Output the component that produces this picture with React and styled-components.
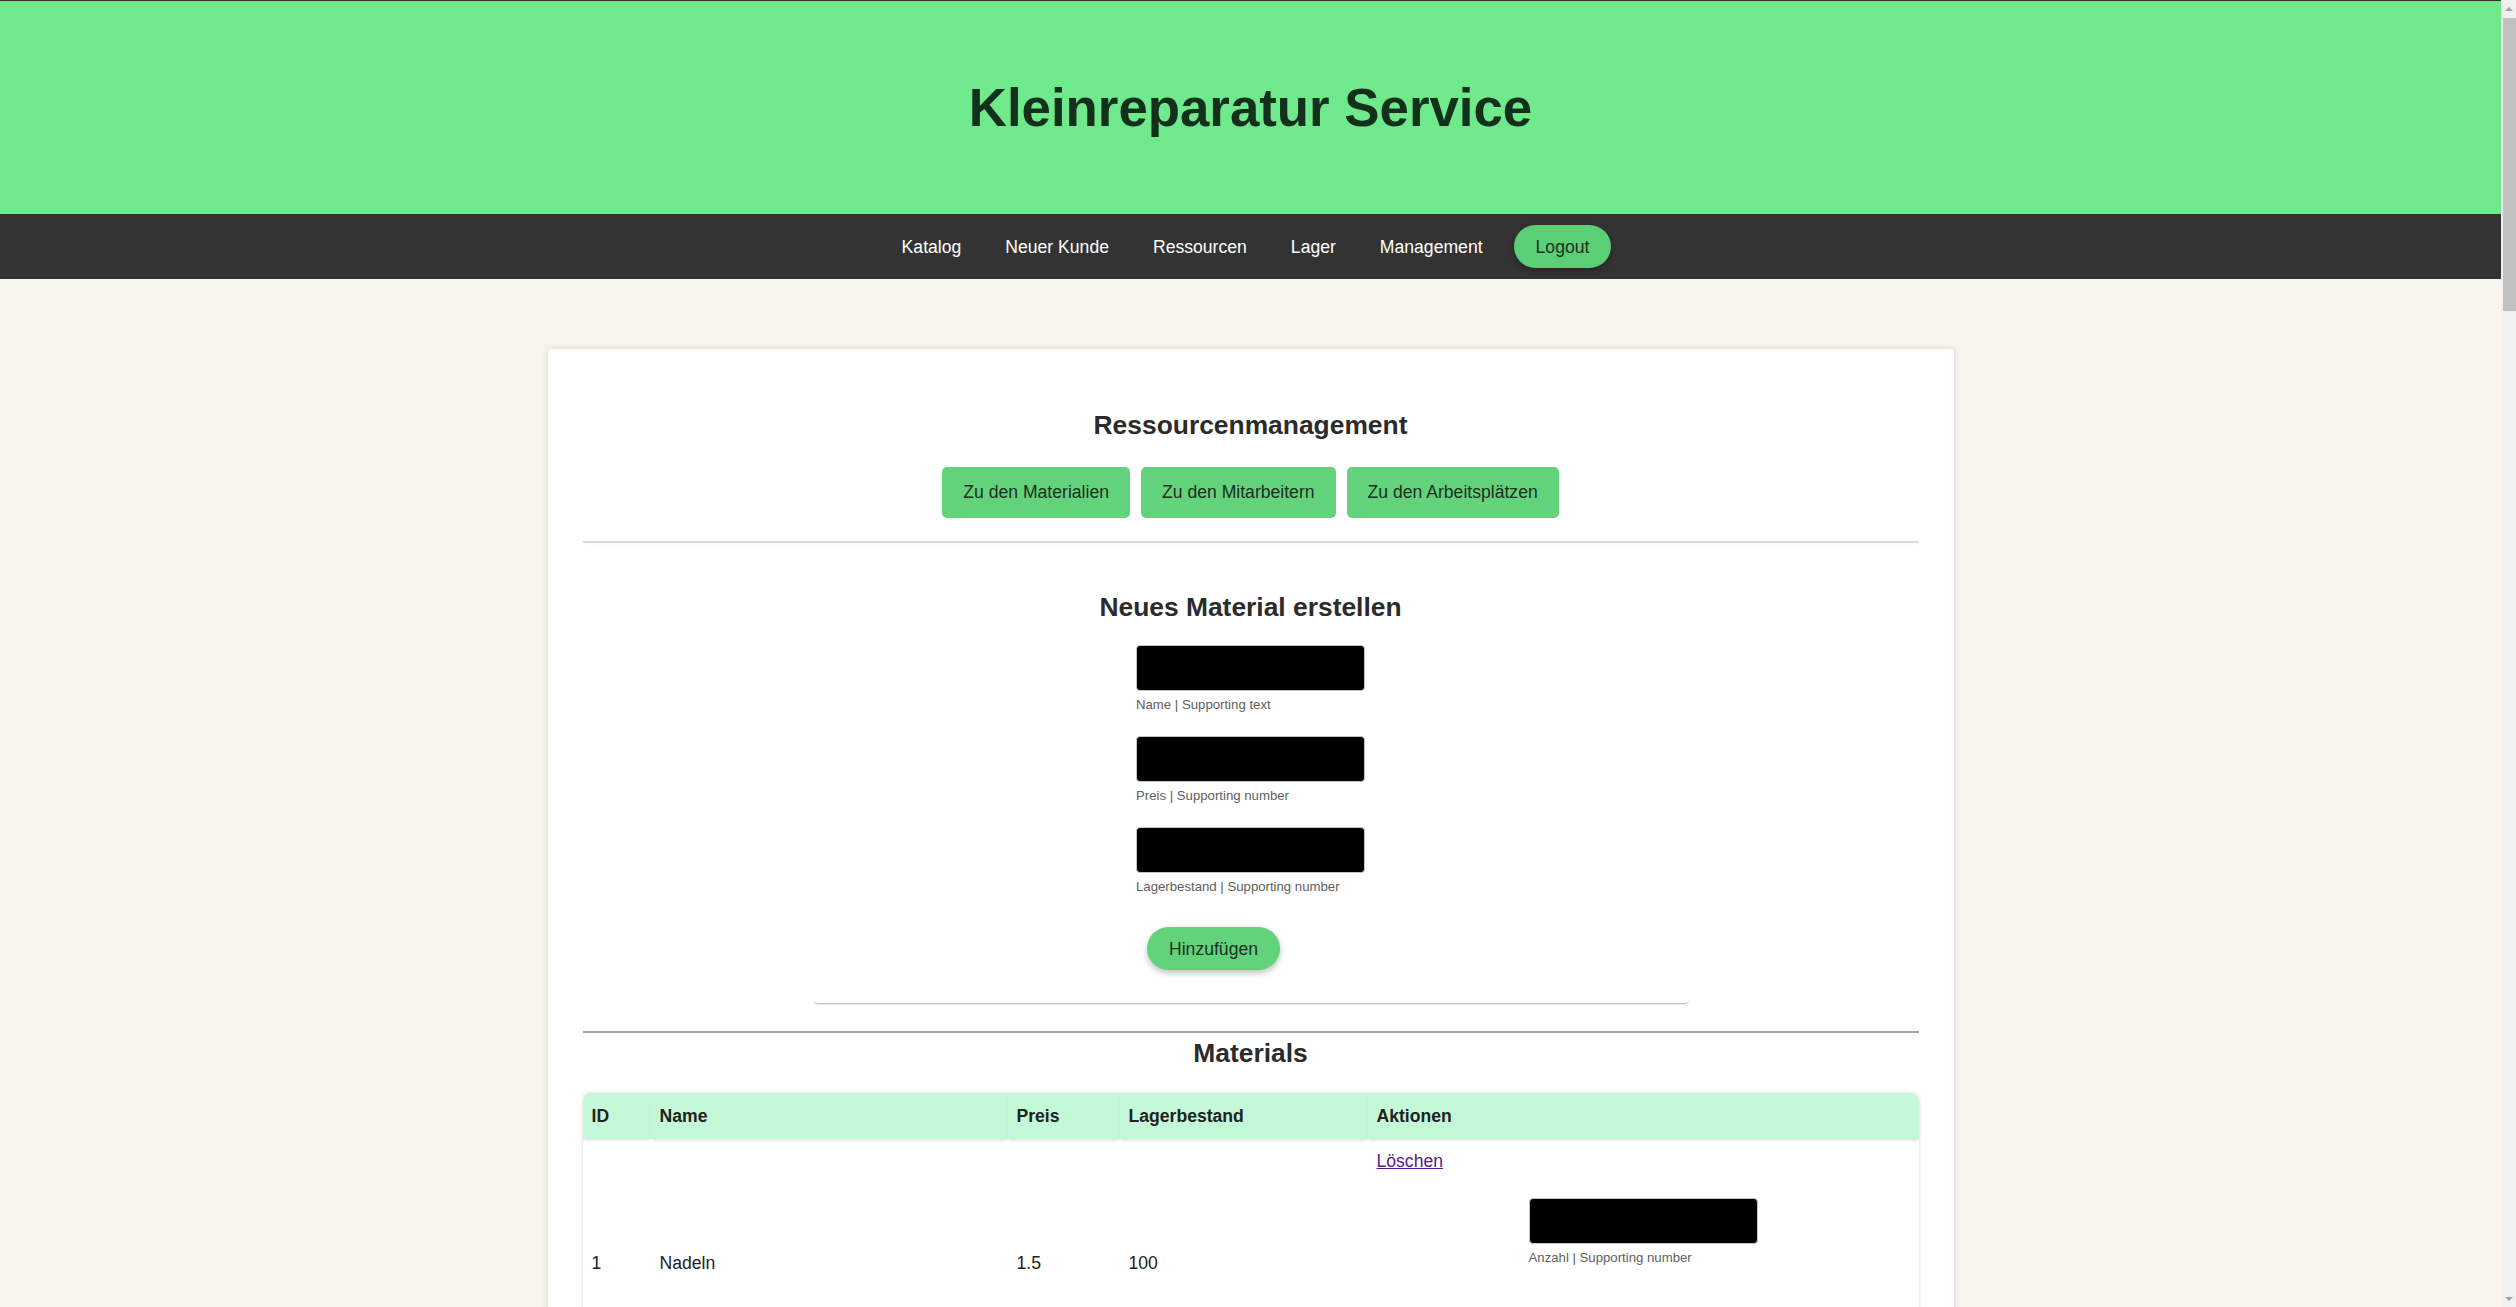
import React, { useState } from "react";
import styled, { createGlobalStyle } from "styled-components";

const GlobalStyle = createGlobalStyle`
  html, body {
    margin: 0;
    padding: 0;
    background: #f7f5ee;
    font-family: "Liberation Sans", Arial, sans-serif;
    font-size: 17.6px;
    color: #222;
  }
  body {
    margin-right: 15px;
  }
  * { box-sizing: border-box; }
`;

// Materialliste
const materials = [
  { id: 1, name: "Nadeln", price: "1.5", stock: 100 },
  { id: 2, name: "Faden", price: "0.8", stock: 250 },
  { id: 3, name: "Knöpfe", price: "0.3", stock: 500 },
  { id: 4, name: "Reißverschluss", price: "2.5", stock: 80 },
  { id: 5, name: "Schuhsohlen", price: "6", stock: 40 },
  { id: 6, name: "Absätze", price: "4.5", stock: 60 },
  { id: 7, name: "Leder", price: "12", stock: 25 },
  { id: 8, name: "Kleber", price: "3.2", stock: 70 },
  { id: 9, name: "Schnürsenkel", price: "1.2", stock: 150 },
  { id: 10, name: "Batterien", price: "2", stock: 120 },
  { id: 11, name: "Uhrenarmband", price: "8", stock: 30 },
  { id: 12, name: "Ösen", price: "0.2", stock: 400 },
  { id: 13, name: "Nieten", price: "0.4", stock: 300 },
  { id: 14, name: "Stoff", price: "5", stock: 50 },
  { id: 15, name: "Garn", price: "1", stock: 200 },
  { id: 16, name: "Schrauben", price: "0.1", stock: 1000 },
  { id: 17, name: "Gummiband", price: "0.6", stock: 180 },
  { id: 18, name: "Schuhcreme", price: "3.5", stock: 45 },
];

const Field = ({ label, value, onChange }) => (
  <InputGroup>
    <BlackInput value={value} onChange={onChange} />
    <HelpText>{label}</HelpText>
  </InputGroup>
);

const App = () => {
  const [name, setName] = useState("");
  const [price, setPrice] = useState("");
  const [stock, setStock] = useState("");

  return (
    <>
      <GlobalStyle />
      <Header>
        <Title>Kleinreparatur Service</Title>
      </Header>
      <Nav>
        <NavLink href="#">Katalog</NavLink>
        <NavLink href="#">Neuer Kunde</NavLink>
        <NavLink href="#">Ressourcen</NavLink>
        <NavLink href="#">Lager</NavLink>
        <NavLink href="#">Management</NavLink>
        <PillButton $nav>Logout</PillButton>
      </Nav>

      <Card>
        <SectionTitle>Ressourcenmanagement</SectionTitle>
        <ButtonRow>
          <LinkButton>Zu den Materialien</LinkButton>
          <LinkButton>Zu den Mitarbeitern</LinkButton>
          <LinkButton>Zu den Arbeitsplätzen</LinkButton>
        </ButtonRow>
        <Divider />

        <FormBox $main>
          <SectionTitle>Neues Material erstellen</SectionTitle>
          <Fields $top>
            <Field label="Name | Supporting text" value={name} onChange={(e) => setName(e.target.value)} />
            <Field label="Preis | Supporting number" value={price} onChange={(e) => setPrice(e.target.value)} />
            <Field label="Lagerbestand | Supporting number" value={stock} onChange={(e) => setStock(e.target.value)} />
            <PillButton>Hinzufügen</PillButton>
          </Fields>
        </FormBox>

        <Divider $dark />
        <SectionTitle $small>Materials</SectionTitle>

        <Table>
          <colgroup>
            <col style={{ width: 68 }} />
            <col style={{ width: 357 }} />
            <col style={{ width: 112 }} />
            <col style={{ width: 248 }} />
            <col />
          </colgroup>
          <thead>
            <tr>
              <Th>ID</Th>
              <Th>Name</Th>
              <Th>Preis</Th>
              <Th>Lagerbestand</Th>
              <Th>Aktionen</Th>
            </tr>
          </thead>
          <tbody>
            {materials.map((m) => (
              <tr key={m.id}>
                <Td>{m.id}</Td>
                <Td>{m.name}</Td>
                <Td>{m.price}</Td>
                <Td>{m.stock}</Td>
                <Td>
                  <DeleteLink href="#">Löschen</DeleteLink>
                  <FormBox>
                    <Fields $cell>
                      <Field label="Anzahl | Supporting number" />
                      <PillButton>Nachbestellen</PillButton>
                    </Fields>
                  </FormBox>
                </Td>
              </tr>
            ))}
          </tbody>
        </Table>
      </Card>

      {/* Scrollleiste wie im Fenster */}
      <ScrollTrack>
        <Arrow />
        <Thumb />
        <Arrow $down />
      </ScrollTrack>
    </>
  );
};

export default App;

const Header = styled.header`
  height: 214px;
  border-top: 1px solid #333;
  background: #6fe98b;
  display: flex;
  align-items: center;
  justify-content: center;
`;

const Title = styled.h1`
  margin: 0;
  font-size: 52.8px;
  font-weight: 700;
  color: #12301b;
`;

const Nav = styled.nav`
  height: 65px;
  padding-right: 10px;
  background: #333;
  display: flex;
  align-items: center;
  justify-content: center;
`;

const NavLink = styled.a`
  padding: 0 22px;
  color: #fff;
  text-decoration: none;
  font-size: 17.6px;
  line-height: 20px;
`;

const PillButton = styled.button`
  align-self: ${(p) => (p.$nav ? "center" : "flex-start")};
  margin: ${(p) => (p.$nav ? "0 0 0 9px" : "0 0 0 11px")};
  padding: 11.5px 22px;
  border: none;
  border-radius: 22px;
  background: ${(p) => (p.$nav ? "#5bcf76" : "#62d37b")};
  color: #1c2e21;
  font-family: inherit;
  font-size: 17.6px;
  line-height: 20px;
  box-shadow: 0 3px 6px rgba(0, 0, 0, 0.25);
  cursor: pointer;
`;

const Card = styled.main`
  width: 1406px;
  margin: 70px auto 70px;
  padding: 61px 35px 40px;
  background: #fff;
  border-radius: 4px;
  box-shadow: 0 0 6px rgba(0, 0, 0, 0.15);
`;

const SectionTitle = styled.h2`
  margin: ${(p) => (p.$small ? "5px 0 0" : "0")};
  text-align: center;
  font-size: 26.4px;
  line-height: 30px;
  font-weight: 700;
  color: #2b2b2b;
`;

const ButtonRow = styled.div`
  margin-top: 27px;
  display: flex;
  justify-content: center;
  gap: 11px;
`;

const LinkButton = styled.button`
  height: 51px;
  padding: 0 21px;
  border: none;
  border-radius: 5px;
  background: #62d37b;
  color: #1c2e21;
  font-family: inherit;
  font-size: 17.6px;
  cursor: pointer;
`;

const Divider = styled.hr`
  margin: ${(p) => (p.$dark ? "28px 0 0" : "23px 0 0")};
  height: 2px;
  border: none;
  background: ${(p) => (p.$dark ? "#a3a3a3" : "#dcdcdc")};
  box-shadow: ${(p) => (p.$dark ? "none" : "0 0 9px rgba(0, 0, 0, 0.05)")};
`;

const FormBox = styled.div`
  width: ${(p) => (p.$main ? "878px" : "100%")};
  margin: 0 auto;
  padding: ${(p) => (p.$main ? "49px 0 33px" : "0 0 21px")};
  border-radius: 0 0 6px 6px;
  box-shadow: 0 3px 2px -2px rgba(0, 0, 0, 0.3);
`;

const Fields = styled.div`
  width: 229px;
  margin: ${(p) => (p.$top ? "23px auto 0" : "0 auto")};
  display: flex;
  flex-direction: column;
  gap: 24px;

  & > button {
    margin-top: ${(p) => (p.$cell ? "22px" : "9px")};
  }
`;

const InputGroup = styled.div`
  display: flex;
  flex-direction: column;
`;

const BlackInput = styled.input`
  width: 229px;
  height: 46px;
  border: 1px solid #c4c4c4;
  border-radius: 4px;
  background: #000;
  color: #fff;
  padding: 0 10px;
  outline: none;
`;

const HelpText = styled.span`
  margin-top: 6px;
  font-size: 13.2px;
  line-height: 15px;
  color: #606060;
  white-space: nowrap;
`;

const Table = styled.table`
  width: 100%;
  margin-top: 25px;
  border-collapse: separate;
  border-spacing: 0;
  table-layout: fixed;
  border-radius: 8px 8px 0 0;
  box-shadow: 0 0 4px rgba(0, 0, 0, 0.15);
`;

const Th = styled.th`
  height: 46px;
  padding: 0 9px;
  text-align: left;
  font-size: 17.6px;
  font-weight: 700;
  color: #222;
  background: #c3f9d6;
  box-shadow: 0 3px 3px -1px rgba(0, 0, 0, 0.1);

  &:first-child { border-top-left-radius: 8px; }
  &:last-child { border-top-right-radius: 8px; }
`;

const Td = styled.td`
  padding: 12px 9px;
  vertical-align: middle;
  font-size: 17.6px;
  line-height: 20px;
  color: #222;
  border-bottom: 1px solid #eee;
`;

const DeleteLink = styled.a`
  display: block;
  width: fit-content;
  margin-bottom: 27px;
  color: #551a8b;
  text-decoration: underline;
`;

const ScrollTrack = styled.div`
  position: fixed;
  top: 0;
  right: 0;
  width: 15px;
  height: 100vh;
  background: #f1f1f1;
  display: flex;
  flex-direction: column;
  align-items: flex-end;
`;

const Arrow = styled.div`
  width: 15px;
  height: 17px;
  margin-top: ${(p) => (p.$down ? "auto" : "0")};
  display: flex;
  align-items: center;
  justify-content: center;

  &::before {
    content: "";
    border-left: 4px solid transparent;
    border-right: 4px solid transparent;
    ${(p) =>
      p.$down
        ? "border-top: 4px solid #a3a3a3;"
        : "border-bottom: 4px solid #a3a3a3;"}
  }
`;

const Thumb = styled.div`
  width: 13px;
  height: 293px;
  margin-top: 1px;
  background: #c1c1c1;
`;
